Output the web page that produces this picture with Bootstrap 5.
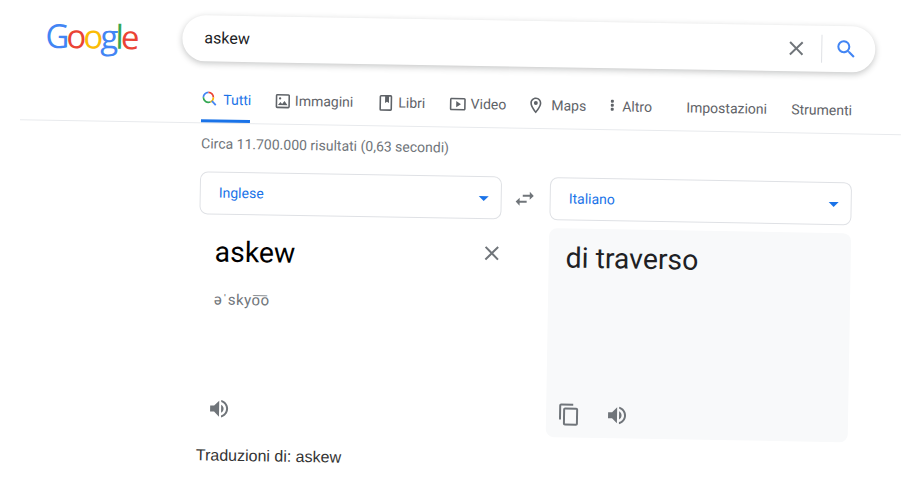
<!DOCTYPE html>
<html lang="it">
<head>
<meta charset="utf-8">
<title>askew - Cerca con Google</title>
<link href="https://cdn.jsdelivr.net/npm/bootstrap@5.3.0/dist/css/bootstrap.min.css" rel="stylesheet">
<style>
html,body{background:#fff;overflow:hidden;height:484px}
body{font-family:Roboto,"Liberation Sans",sans-serif;color:#202124}
.sheet{width:895px;height:465px;margin-left:8px;transform-origin:0 0;transform:rotate(.97deg)}
.topbar{padding-top:12px;height:58px}
.logo-box{width:175px;padding-left:38px;height:46px;line-height:46px;font-family:"Open Sans",sans-serif;font-weight:500;font-size:33px;letter-spacing:-2.900px;white-space:nowrap}
.g-blue{color:#4285f4}.g-red{color:#ea4335}.g-yel{color:#fbbc05}.g-grn{color:#34a853}
.searchbox{width:693px;height:46px;border-radius:23px;box-shadow:0 2px 6px rgba(32,33,36,.26);padding-left:22px;padding-right:17px;font-size:16px}
.searchbox .qtext{color:#202124}
.vsep{width:1px;height:28px;background:#dfe1e5;margin:0 12px 0 13px}
.tabrow{margin-left:195px;width:652px;height:60.7px;font-size:14px;color:#5f6368}
.tabitem{height:60.7px;padding-top:28px;white-space:nowrap;gap:3px}
.tabitem svg{fill:#5f6368;flex:none;margin-top:1px}
.tab-on{color:#1a73e8;border-bottom:3px solid #1a73e8;width:49px;margin-right:22.600px;gap:6px}
.w-imm{width:103.400px}.w-lib{width:72.400px}.w-vid{width:77.600px}.w-map{width:78px;gap:6px}.w-alt{width:82px;gap:2px}.w-imp{width:105px}
.ruler{margin-left:14px;border-top:1px solid #e8eaed}
.statline{margin:11px 0 0 195.500px;height:18px;line-height:18px;font-size:14px;color:#70757a}
.translator{margin:19px 0 0 195px;width:652px}
.langcol{width:302px}
.langpick{height:43px;border:1px solid #dfe1e5;border-radius:8px;padding-left:18px;padding-right:12px;font-size:14px;color:#1a73e8}
.caret-down{width:0;height:0;border-left:5px solid transparent;border-right:5px solid transparent;border-top:5px solid #1a73e8;margin-top:3px}
.swapwrap{width:48px;height:43px;padding:1px 2px 0 0}
.srcpane{height:209px;margin-top:8px;padding:14px 0 8px 16px}
.dstpane{height:209px;margin-top:8px;padding:14px 14px 8px 17px;background:#f8f9fa;border-radius:8px}
.bigword{font-size:28.400px;line-height:32px;color:#202124}
.srcpane .bigword{color:#000}
.x-btn{margin:0 -3px 8px 0}
.phon{margin:21px 0 0 0;font-size:15px;line-height:20px;color:#70757a;letter-spacing:.5px}
.paneicons{gap:24px;margin-top:auto;padding-bottom:3px;margin-left:-5px}
.dstpane .paneicons{margin-left:-6px}
.ico-grey{fill:#70757a;flex:none}
.transfoot{margin:14px 0 0 195.500px;font-family:"Liberation Sans",sans-serif;font-size:16px;line-height:20px;color:#333}
</style>
</head>
<body>
<div class="sheet">
  <header class="topbar d-flex">
    <div class="logo-box"><span class="g-blue">G</span><span class="g-red">o</span><span class="g-yel">o</span><span class="g-blue">g</span><span class="g-grn">l</span><span class="g-red">e</span></div>
    <div class="searchbox d-flex align-items-center bg-white">
      <span class="qtext flex-grow-1">askew</span>
      <svg width="24" height="24" viewBox="0 0 24 24" fill="#70757a"><path d="M19 6.41L17.59 5 12 10.59 6.41 5 5 6.41 10.59 12 5 17.59 6.41 19 12 13.41 17.59 19 19 17.59 13.41 12z"/></svg>
      <span class="vsep"></span>
      <svg width="24" height="24" viewBox="0 0 24 24" fill="#4285f4"><path d="M15.5 14h-.79l-.28-.27A6.471 6.471 0 0 0 16 9.5 6.5 6.5 0 1 0 9.5 16c1.61 0 3.09-.59 4.23-1.57l.27.28v.79l5 4.99L20.49 19l-4.99-5zm-6 0C7.01 14 5 11.99 5 9.5S7.01 5 9.5 5 14 7.01 14 9.5 11.99 14 9.5 14z"/></svg>
    </div>
  </header>
  <nav class="tabrow d-flex">
    <div class="tabitem tab-on d-flex align-items-start">
      <svg width="16" height="16" viewBox="0 0 16 16" style="fill:none"><path d="M2 7a5 5 0 0 1 5-5" stroke="#4285f4" stroke-width="1.7"/><path d="M7 2a5 5 0 0 1 5 5" stroke="#ea4335" stroke-width="1.7"/><path d="M12 7a5 5 0 0 1-3 4.6" stroke="#fbbc05" stroke-width="1.7"/><path d="M9 11.6A5 5 0 0 1 2 7" stroke="#34a853" stroke-width="1.7"/><path d="M10.5 10.5L14.5 14.5" stroke="#4285f4" stroke-width="1.8"/></svg>
      <span>Tutti</span>
    </div>
    <div class="tabitem w-imm d-flex align-items-start">
      <svg width="19" height="19" viewBox="0 0 24 24"><path d="M19 5v14H5V5h14m0-2H5c-1.100 0-2 .9-2 2v14c0 1.100.9 2 2 2h14c1.100 0 2-.9 2-2V5c0-1.100-.9-2-2-2z"/><path d="M14.140 11.860l-3 3.870L9 13.140 6 17h12z"/><circle cx="8.500" cy="8.500" r="1.500"/></svg>
      <span>Immagini</span>
    </div>
    <div class="tabitem w-lib d-flex align-items-start">
      <svg width="19" height="19" viewBox="0 0 24 24"><path fill-rule="evenodd" d="M6 2h12a2 2 0 0 1 2 2v16a2 2 0 0 1-2 2H6a2 2 0 0 1-2-2V4a2 2 0 0 1 2-2zm0 2v16h12V4h-2v8l-2.500-1.500L11 12V4H6z"/></svg>
      <span>Libri</span>
    </div>
    <div class="tabitem w-vid d-flex align-items-start">
      <svg width="19" height="19" viewBox="0 0 24 24"><path d="M10 8v8l6-4z"/><path d="M20 4H4c-1.100 0-2 .9-2 2v12c0 1.100.9 2 2 2h16c1.100 0 2-.9 2-2V6c0-1.100-.9-2-2-2zm0 14H4V6h16v12z"/></svg>
      <span>Video</span>
    </div>
    <div class="tabitem w-map d-flex align-items-start">
      <svg width="19" height="19" viewBox="0 0 24 24"><path d="M12 2C8.130 2 5 5.130 5 9c0 5.250 7 13 7 13s7-7.750 7-13c0-3.870-3.130-7-7-7zM7 9c0-2.760 2.240-5 5-5s5 2.240 5 5c0 2.880-2.880 7.190-5 9.880C9.920 16.210 7 11.850 7 9z"/><circle cx="12" cy="9" r="2.500"/></svg>
      <span>Maps</span>
    </div>
    <div class="tabitem w-alt d-flex align-items-start">
      <svg width="16" height="16" viewBox="0 0 16 16"><rect x="6.500" y="2.500" width="3" height="3" rx="1"/><rect x="6.500" y="6.500" width="3" height="3" rx="1"/><rect x="6.500" y="10.500" width="3" height="3" rx="1"/></svg>
      <span>Altro</span>
    </div>
    <div class="tabitem w-imp"><span>Impostazioni</span></div>
    <div class="tabitem"><span>Strumenti</span></div>
  </nav>
  <div class="ruler"></div>
  <div class="statline">Circa 11.700.000 risultati (0,63 secondi)</div>
  <section class="translator d-flex">
    <div class="langcol">
      <div class="langpick d-flex align-items-center justify-content-between bg-white"><span>Inglese</span><span class="caret-down"></span></div>
      <div class="srcpane d-flex flex-column">
        <div class="d-flex justify-content-between align-items-center">
          <div class="bigword">askew</div>
          <svg class="x-btn" width="24" height="24" viewBox="0 0 24 24" fill="#70757a"><path d="M19 6.41L17.59 5 12 10.59 6.41 5 5 6.41 10.59 12 5 17.59 6.41 19 12 13.41 17.59 19 19 17.59 13.41 12z"/></svg>
        </div>
        <div class="phon">əˈskyo͞o</div>
        <div class="paneicons d-flex">
          <svg class="ico-grey" width="24" height="24" viewBox="0 0 24 24"><path d="M3 9v6h4l5 5V4L7 9H3zm13.500 3c0-1.770-1.020-3.290-2.500-4.030v8.050c1.480-.73 2.500-2.250 2.500-4.020z"/><path d="M14 3.230v2.060c2.890.86 5 3.540 5 6.710s-2.110 5.850-5 6.710v2.060c4.010-.91 7-4.490 7-8.770 0-4.280-2.990-7.860-7-8.770z"/></svg>
        </div>
      </div>
    </div>
    <div class="swapwrap d-flex align-items-center justify-content-center">
      <svg class="ico-grey" width="24" height="24" viewBox="0 0 24 24"><path d="M6.990 11L3 15l3.990 4v-3H14v-2H6.990v-3zM21 9l-3.990-4v3H10v2h7.010v3L21 9z"/></svg>
    </div>
    <div class="langcol">
      <div class="langpick d-flex align-items-center justify-content-between bg-white"><span>Italiano</span><span class="caret-down"></span></div>
      <div class="dstpane d-flex flex-column">
        <div class="bigword">di traverso</div>
        <div class="paneicons d-flex">
          <svg class="ico-grey" width="24" height="24" viewBox="0 0 24 24"><path d="M16 1H4c-1.100 0-2 .9-2 2v14h2V3h12V1zm3 4H8c-1.100 0-2 .9-2 2v14c0 1.100.9 2 2 2h11c1.100 0 2-.9 2-2V7c0-1.100-.9-2-2-2zm0 16H8V7h11v14z"/></svg>
          <svg class="ico-grey" width="24" height="24" viewBox="0 0 24 24"><path d="M3 9v6h4l5 5V4L7 9H3zm13.500 3c0-1.770-1.020-3.290-2.500-4.030v8.050c1.480-.73 2.500-2.250 2.500-4.020z"/><path d="M14 3.230v2.060c2.890.86 5 3.540 5 6.710s-2.110 5.850-5 6.710v2.060c4.010-.91 7-4.490 7-8.770 0-4.280-2.990-7.860-7-8.770z"/></svg>
        </div>
      </div>
    </div>
  </section>
  <div class="transfoot">Traduzioni di: askew</div>
</div>
<script src="https://cdn.jsdelivr.net/npm/bootstrap@5.3.0/dist/js/bootstrap.bundle.min.js"></script>
</body>
</html>
